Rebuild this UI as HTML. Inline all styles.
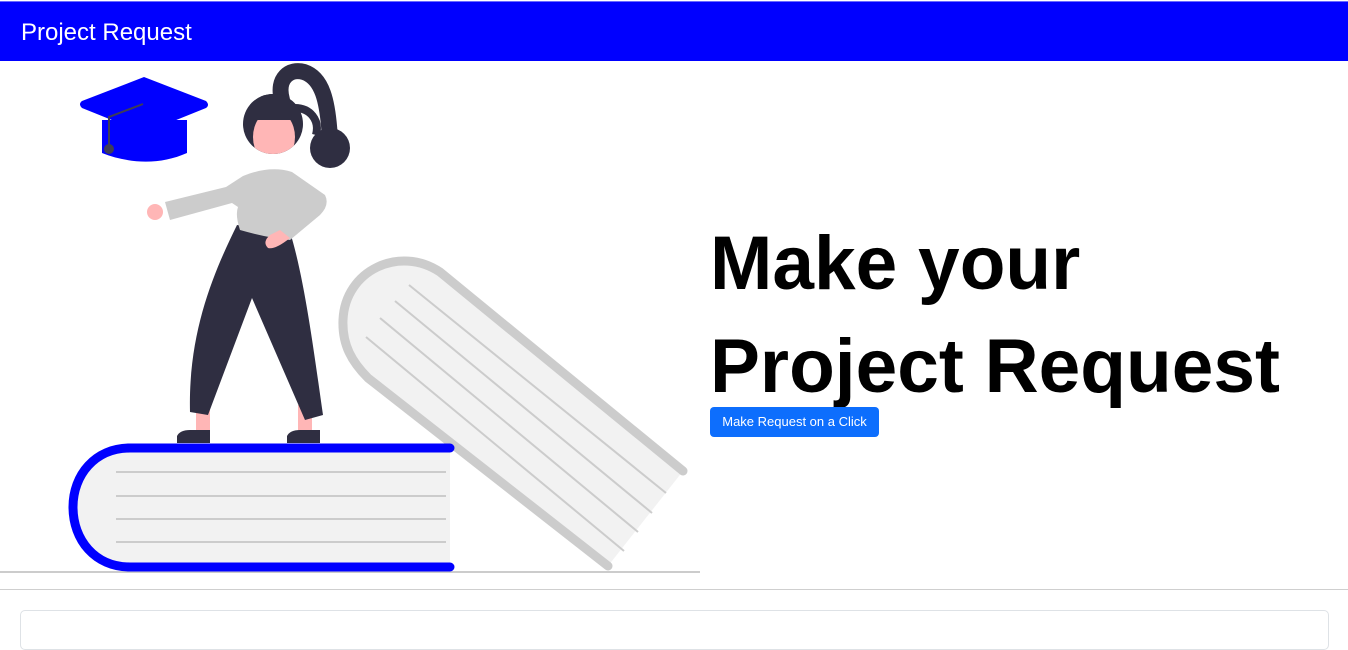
<!DOCTYPE html>
<html><head><meta charset="utf-8"><style>
*{margin:0;padding:0;box-sizing:border-box}
body{width:1348px;height:626px;overflow:hidden;background:#fff;font-family:"Liberation Sans",sans-serif;position:relative}
.nav{position:absolute;left:0;top:1px;width:1348px;height:60px;background:#0000ff;border-top:1px solid #6a6aff}
.nav span{position:absolute;left:21px;top:17px;color:#fff;font-size:24px}
svg{position:absolute;left:0;top:0}
h1{position:absolute;left:710px;top:212px;font-weight:bold;font-size:76px;line-height:103px;color:#000;white-space:nowrap;transform:scaleX(0.985);transform-origin:0 0}
.btn{position:absolute;left:710px;top:407px;width:169px;height:30px;background:#0d6efd;color:#fff;font-size:13px;line-height:30px;text-align:center;border-radius:4px}
.hr{position:absolute;left:0;top:589px;width:1348px;height:1px;background:#cfcfcf}
.card{position:absolute;left:20px;top:610px;width:1309px;height:40px;border:1px solid #dee2e6;border-radius:5px}
</style></head><body>
<div class="nav"><span>Project Request</span></div>
<svg width="700" height="580" viewBox="0 0 700 580">
<defs><clipPath id="hc"><circle cx="273" cy="124" r="30"/></clipPath></defs>
<line x1="0" y1="572" x2="700" y2="572" stroke="#ccc" stroke-width="2"/>
<path d="M683 471 L440 272 C400 245 345 270 343 320 C342 345 352 362 368 378 L608 566 Z" fill="#f2f2f2"/>
<path d="M683 471 L440 272 C400 245 345 270 343 320 C342 345 352 362 368 378 L608 566" fill="none" stroke="#ccc" stroke-width="9" stroke-linecap="round"/>
<g stroke="#ccc" stroke-width="2">
<line x1="409" y1="285" x2="666" y2="493"/>
<line x1="395" y1="301" x2="652" y2="513"/>
<line x1="380" y1="318" x2="638" y2="532"/>
<line x1="366" y1="337" x2="624" y2="551"/>
</g>
<path d="M450 448 L120 448 C90 448 73 475 73 505 C73 540 95 567 125 567 L450 567 Z" fill="#f2f2f2"/>
<path d="M450 448 L130 448 C95 448 73 475 73 507 C73 540 95 567 130 567 L450 567" fill="none" stroke="#0000ff" stroke-width="9" stroke-linecap="round"/>
<g stroke="#ccc" stroke-width="2">
<line x1="116" y1="472" x2="446" y2="472"/><line x1="116" y1="496" x2="446" y2="496"/>
<line x1="116" y1="519" x2="446" y2="519"/><line x1="116" y1="542" x2="446" y2="542"/>
</g>
<path d="M102 120 L187 120 L187 153 C160 165 130 164 102 153 Z" fill="#0000ff"/>
<path d="M144 77 L206 101 Q210 105 206 108 L144 133 L82 108 Q78 104 82 101 Z" fill="#0000ff"/>
<path d="M143 104 L109 117 L109 148" fill="none" stroke="#3f3d56" stroke-width="2"/>
<circle cx="109" cy="149" r="5" fill="#3f3d56"/>
<path d="M282 100 C276 78 290 68 304 72 C322 78 328 100 330 140" fill="none" stroke="#2f2e41" stroke-width="16" stroke-linecap="round"/>
<path d="M295 108 C310 108 320 120 316 135" fill="none" stroke="#2f2e41" stroke-width="8"/>
<circle cx="330" cy="148" r="20" fill="#2f2e41"/>
<circle cx="273" cy="124" r="30" fill="#2f2e41"/>
<ellipse cx="274" cy="137" rx="21" ry="27" fill="#ffb6b6" clip-path="url(#hc)"/>
<rect x="250" y="92" width="48" height="28" fill="#2f2e41" clip-path="url(#hc)"/>
<rect x="196" y="405" width="14" height="30" fill="#ffb6b6"/>
<rect x="298" y="405" width="14" height="30" fill="#ffb6b6"/>
<path d="M177 443 L177 436 Q180 430 190 430 L210 430 L210 443 Z" fill="#2f2e41"/>
<path d="M287 443 L287 436 Q290 430 300 430 L320 430 L320 443 Z" fill="#2f2e41"/>
<path d="M237 225 L290 232 C305 280 315 360 323 415 L305 420 L252 298 L208 415 L190 412 C188 330 215 270 237 225 Z" fill="#2f2e41"/>
<path d="M165 202 L226 187 L243 176 Q270 165 292 172 L325 195 Q330 205 320 215 L290 240 Q268 238 240 230 Q235 215 238 207 L232 203 L170 220 Z" fill="#ccc"/>
<circle cx="155" cy="212" r="8" fill="#ffb6b6"/>
<path d="M280 230 L270 235 Q262 242 268 248 Q275 250 290 238 Z" fill="#ffb6b6"/>
</svg>
<h1>Make your<br>Project Request</h1>
<div class="btn">Make Request on a Click</div>
<div class="hr"></div>
<div class="card"></div>
</body></html>
